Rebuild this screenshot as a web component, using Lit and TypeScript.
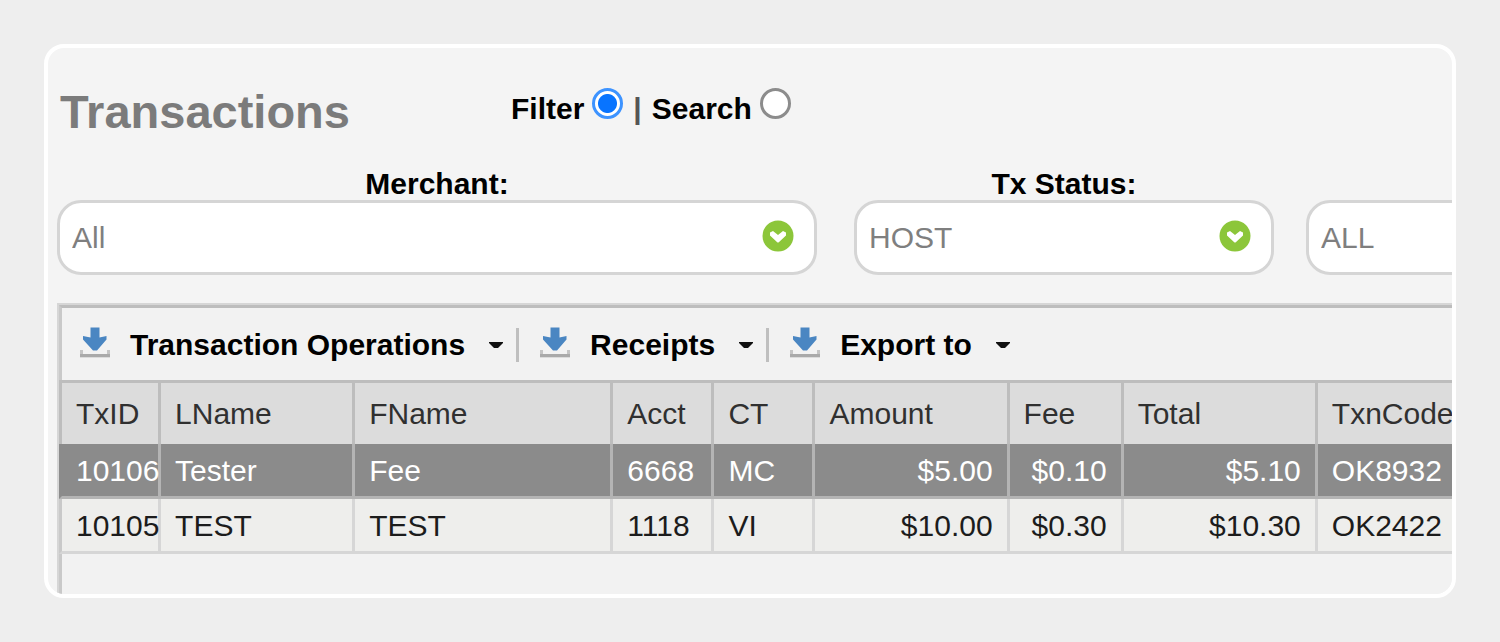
import { LitElement, html, css, svg } from "lit";
import { customElement, state } from "lit/decorators.js";
import { classMap } from "lit/directives/class-map.js";

interface Column {
  key: string;
  label: string;
  size: string;
  money?: boolean;
}

const columns: Column[] = [
  { key: "id", label: "TxID", size: "w-id" },
  { key: "last", label: "LName", size: "w-name" },
  { key: "first", label: "FName", size: "w-first" },
  { key: "acct", label: "Acct", size: "w-short" },
  { key: "ct", label: "CT", size: "w-short" },
  { key: "amount", label: "Amount", size: "w-name", money: true },
  { key: "fee", label: "Fee", size: "w-fee", money: true },
  { key: "total", label: "Total", size: "w-name", money: true },
  { key: "code", label: "TxnCode", size: "w-name" },
];

const rows: Record<string, string>[] = [
  { id: "10106", last: "Tester", first: "Fee", acct: "6668", ct: "MC", amount: "$5.00", fee: "$0.10", total: "$5.10", code: "OK8932" },
  { id: "10105", last: "TEST", first: "TEST", acct: "1118", ct: "VI", amount: "$10.00", fee: "$0.30", total: "$10.30", code: "OK2422" },
];

const downloadIcon = svg`
  <svg class="download" viewBox="0 0 30 32" aria-hidden="true">
    <path d="M10.500 0.500h9v10l7-1.500v3.500L17 23.500h-4L3 12.500V9l7.500 1.500z" fill="#4a86c2"/>
    <path d="M1.500 23v6h27v-6" fill="none" stroke="#c4c4c4" stroke-width="3"/>
    <path d="M0 28.500h30" stroke="#a9a9a9" stroke-width="3"/>
  </svg>`;

const caretIcon = svg`
  <svg class="caret" viewBox="0 0 16 8" aria-hidden="true">
    <path d="M1 1h14v1L10 7H6L1 2z" fill="#111"/>
  </svg>`;

const chevronIcon = svg`
  <svg class="chevron" viewBox="0 0 32 32" aria-hidden="true">
    <circle cx="16" cy="16" r="15.500" fill="#8cc63a"/>
    <path d="M8 12.500l3-1.500 5 4 5-4 3 1.500v3L16.500 22.500h-1L8 15.500z" fill="#fff"/>
  </svg>`;

@customElement("app-root")
export class AppRoot extends LitElement {
  @state() private mode = "filter";
  @state() private selected = "10106";

  static styles = css`
    :host {
      display: block;
      box-sizing: border-box;
      min-height: 100vh;
      padding: 44px;
      background: #eeeeee;
      color: #000;
      font-family: "Liberation Sans", Arial, sans-serif;
      font-size: 30px;
    }
    .card {
      border: 4px solid #fff;
      border-radius: 20px;
      background: #f4f4f4;
      overflow: hidden;
      padding: 38px 0 0 9px;
    }
    .top {
      display: flex;
      align-items: flex-start;
      padding-left: 3px;
    }
    h1 {
      flex: none;
      width: 451px;
      margin: 0;
      font-size: 47px;
      line-height: 52px;
      color: #7b7b7b;
    }
    .modes {
      display: flex;
      align-items: baseline;
      gap: 8px;
      margin-top: 2px;
      font-weight: bold;
      line-height: 34px;
    }
    .bar {
      margin: 0 2px;
      color: #555;
    }
    .modes input {
      appearance: none;
      box-sizing: border-box;
      width: 31px;
      height: 31px;
      margin: 0;
      border: 3px solid #8c8c8c;
      border-radius: 50%;
      background: #fff;
    }
    .modes input:checked {
      border-color: #3d93ff;
      background: radial-gradient(circle, #0874ff 9px, #fff 10px);
    }
    .filters {
      display: flex;
      margin-top: 30px;
    }
    .field {
      flex: none;
      width: 420px;
      margin-right: 32px;
      text-align: center;
    }
    .field.wide {
      width: 760px;
      margin-right: 37px;
    }
    .field label {
      display: block;
      min-height: 32px;
      line-height: 32px;
      font-weight: bold;
    }
    .picker {
      display: grid;
      align-items: center;
    }
    .picker > * {
      grid-area: 1 / 1;
    }
    select {
      appearance: none;
      box-sizing: border-box;
      width: 100%;
      height: 75px;
      padding: 0 64px 0 12px;
      border: 3px solid #d5d5d5;
      border-radius: 24px;
      background: #fff;
      color: #7f7f7f;
      font: inherit;
    }
    .chevron {
      justify-self: end;
      width: 32px;
      height: 32px;
      margin: 0 23px 4px 0;
      pointer-events: none;
    }
    .panel {
      margin-top: 28px;
      border: solid #d6d6d6;
      border-width: 2px 0 0 2px;
      background: #f2f2f2;
    }
    .toolbar {
      display: flex;
      align-items: center;
      box-sizing: border-box;
      height: 75px;
      padding: 2px 0 0 18px;
      border: solid #bdbdbd;
      border-width: 3px 0 0 3px;
      border-left-color: #c9c9c9;
    }
    .toolbar button {
      display: flex;
      align-items: center;
      padding: 0;
      border: 0;
      background: none;
      color: #000;
      font: inherit;
      font-weight: bold;
      line-height: 34px;
    }
    .toolbar button + button::before {
      content: "";
      width: 3px;
      height: 34px;
      margin: 0 21px 0 12px;
      background: #bfbfbf;
    }
    .download {
      width: 30px;
      height: 32px;
      margin: 0 20px 4px 0;
    }
    .caret {
      width: 16px;
      height: 8px;
      margin-left: 23px;
    }
    table {
      width: 1453px;
      table-layout: fixed;
      border-collapse: separate;
      border-spacing: 0;
    }
    th,
    td {
      box-sizing: border-box;
      padding: 0 0 0 14px;
      border: 0 solid #d6d6d6;
      border-right-width: 3px;
      font-weight: normal;
      text-align: left;
      white-space: nowrap;
      line-height: 34px;
    }
    th:first-child,
    td:first-child {
      border-left-width: 3px;
    }
    th {
      height: 64px;
      border-color: #bdbdbd;
      border-top-width: 3px;
      background: #dcdcdc;
      color: #303030;
    }
    td {
      height: 55px;
      padding-top: 2px;
      border-bottom-width: 3px;
      background: #eeeeec;
      color: #1c1c1c;
    }
    td:first-child {
      border-left-color: #c9c9c9;
    }
    .money {
      padding-right: 14px;
      text-align: right;
    }
    .selected td {
      border-color: #b4b4b4;
      background: #8b8b8b;
      color: #fff;
    }
    .selected td:first-child {
      border-left-color: #8b8b8b;
    }
    .w-id { width: 102px; }
    .w-name { width: 194px; }
    .w-first { width: 258px; }
    .w-short { width: 101px; }
    .w-fee { width: 114px; }
    .rest {
      height: 40px;
      border-left: 3px solid #c9c9c9;
    }
  `;

  private radio(value: string, label: string) {
    return html`
      <label for=${value}>${label}</label>
      <input id=${value} type="radio" name="mode" .checked=${this.mode === value}
        @change=${() => (this.mode = value)} />`;
  }

  private picker(id: string, label: string, value: string, wide = false) {
    return html`
      <div class=${classMap({ field: true, wide })}>
        <label for=${id}>${label}</label>
        <div class="picker">
          <select id=${id} aria-label=${label || value}><option>${value}</option></select>
          ${chevronIcon}
        </div>
      </div>`;
  }

  render() {
    return html`
      <main class="card">
        <header class="top">
          <h1>Transactions</h1>
          <div class="modes">
            ${this.radio("filter", "Filter")}
            <span class="bar">|</span>
            ${this.radio("search", "Search")}
          </div>
        </header>
        <div class="filters">
          ${this.picker("merchant", "Merchant:", "All", true)}
          ${this.picker("status", "Tx Status:", "HOST")}
          ${this.picker("other", "", "ALL")}
        </div>
        <section class="panel">
          <div class="toolbar">
            ${["Transaction Operations", "Receipts", "Export to"].map(
              (name) => html`<button type="button">${downloadIcon}${name}${caretIcon}</button>`
            )}
          </div>
          <table>
            <colgroup>${columns.map((c) => html`<col class=${c.size} />`)}</colgroup>
            <thead>
              <tr>${columns.map((c) => html`<th scope="col">${c.label}</th>`)}</tr>
            </thead>
            <tbody>
              ${rows.map((r) => html`
                <tr class=${classMap({ selected: r.id === this.selected })}
                  @click=${() => (this.selected = r.id)}>
                  ${columns.map((c) => html`<td class=${classMap({ money: !!c.money })}>${r[c.key]}</td>`)}
                </tr>`)}
            </tbody>
          </table>
          <div class="rest"></div>
        </section>
      </main>`;
  }
}
